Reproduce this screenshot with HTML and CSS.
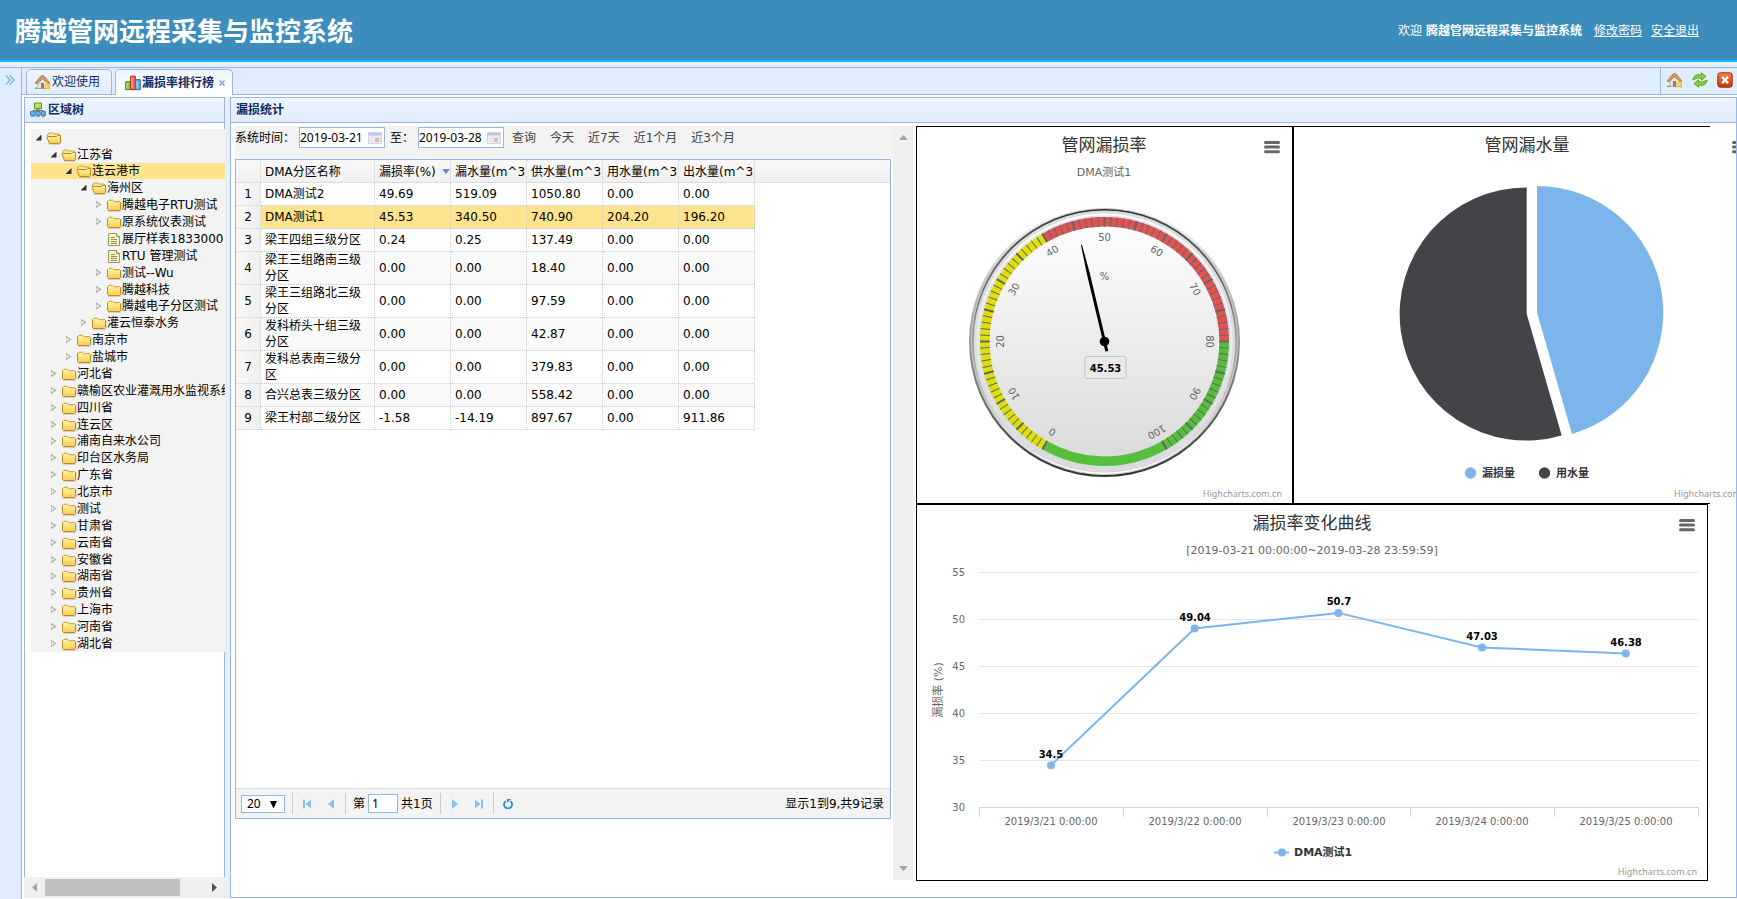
FILE: index.html
```html
<!DOCTYPE html>
<html lang="zh-CN">
<head>
<meta charset="utf-8">
<title>腾越管网远程采集与监控系统</title>
<link rel="stylesheet" href="styles.css">
</head>
<body>
<svg class="defs" aria-hidden="true">
  <defs>
    <linearGradient id="fold" x1="0" y1="0" x2="0" y2="1"><stop offset="0" stop-color="#fff6a0"/><stop offset="1" stop-color="#f5cb55"/></linearGradient>
    <linearGradient id="ora" x1="0" y1="0" x2="0" y2="1"><stop offset="0" stop-color="#f2833f"/><stop offset="1" stop-color="#c9370f"/></linearGradient>
    <linearGradient id="g1" x1="0" y1="0" x2="0" y2="1"><stop offset="0" stop-color="#fff"/><stop offset="1" stop-color="#333"/></linearGradient>
    <linearGradient id="g2" x1="0" y1="0" x2="0" y2="1"><stop offset="0" stop-color="#333"/><stop offset="1" stop-color="#fff"/></linearGradient>
    <linearGradient id="g3" x1="0" y1="0" x2="0" y2="1"><stop offset="0" stop-color="#fff"/><stop offset="1" stop-color="#d9d9d9"/></linearGradient>
    <symbol id="i-folder" viewBox="0 0 16 16">
      <path d="M2 14.500h12.500l.5-1V5" fill="none" stroke="#b9b9b9" opacity=".6"/>
      <path d="M1.500 12.500v-8l1-1h4l1 1h6l1 1v7l-1 1h-11z" fill="url(#fold)" stroke="#c08c22"/>
      <path d="M2 4.500l1-1.500h3.500l1.500 2H13" fill="none" stroke="#e3c684"/>
    </symbol>
    <symbol id="i-open" viewBox="0 0 16 16">
      <path d="M3 14.500h11l.8-1" fill="none" stroke="#b9b9b9" opacity=".6"/>
      <path d="M3 12.500L1.500 5l1.500-2h4l1 1h5l1 1.500v7z" fill="#f9e79a" stroke="#cfa23c"/>
      <path d="M3.500 13.500L1 7.500l.5-1h9l1-1h3v7l-1 1z" fill="url(#fold)" stroke="#bf8a20"/>
    </symbol>
    <symbol id="i-file" viewBox="0 0 16 16">
      <path d="M2.500 2.500h8l3 3v9h-11z" fill="#fbf8b8" stroke="#96946a"/>
      <path d="M10.500 2.500v3h3" fill="#ece9a8" stroke="#96946a"/>
      <path d="M5 6.500h4M5 8.500h6M5 10.500h6M5 12.500h6" stroke="#8c8c78"/>
    </symbol>
    <symbol id="i-house" viewBox="0 0 16 16">
      <path d="M0 13.500h15v1.500H0z" fill="#7cb25a"/>
      <path d="M3 7.500L7.500 3 12.500 8v6.500H3z" fill="#e7e7e3" stroke="#a9a9a2" stroke-width=".7"/>
      <path d="M6 9h3v5.500H6z" fill="#77808a"/>
      <path d="M0 9L6 2q1.500-1.200 3 0l6 7-2 .8-5.500-5-5.300 5.200z" fill="#cf9a62" stroke="#9c6a39" stroke-width=".7"/>
      <path d="M12 8.500l1.200 2.300 2.500.3-1.800 1.900.5 2.500-2.400-1.200-2.300 1.200.4-2.500-1.800-1.900 2.500-.3z" fill="#ffd64d" stroke="#f0a92b" stroke-width=".5"/>
    </symbol>
    <symbol id="i-bars" viewBox="0 0 16 16">
      <path d="M.7 6.700h4.600v8H.7z" fill="#8fcb3a" stroke="#3f8a28"/>
      <path d="M5.700 1.200h4.600v13.500H5.700z" fill="#f4685a" stroke="#b3261e"/>
      <path d="M10.700 4.700h4.600v10h-4.600z" fill="#63b3e6" stroke="#2c6aa5"/>
      <path d="M2 8v5.500M7 2.500v11M12 6v7.500" stroke="#fff" opacity=".5"/>
    </symbol>
    <symbol id="i-tree" viewBox="0 0 16 16">
      <path d="M8 6v4M3 10.500V8.500h10v2" fill="none" stroke="#777"/>
      <path d="M4.500 1h7v5.500h-7z" fill="#b9e35c" stroke="#5a9a2a"/>
      <path d="M5.500 7.500h5v1h-5z" fill="#777"/>
      <path d="M.6 9.600h4.200v3.800H.6zM5.900 9.600h4.200v3.800H5.900zM11.200 9.600h4.200v3.800h-4.200z" fill="#6db8ea" stroke="#3c7fb4"/>
      <path d="M1 14.700h3.500M6.200 14.700h3.500M11.500 14.700H15" stroke="#8a9aa6"/>
    </symbol>
    <symbol id="i-sync" viewBox="0 0 16 16">
      <path d="M1 8c0-3.600 3-5.600 6-5.300h2.500V.8L14 4.500 9.500 8V6H7C5 6 4 6.500 1 8z" fill="#8ccf31" stroke="#4e8f18" stroke-width=".8"/>
      <path d="M15 8c0 3.600-3 5.600-6 5.300H6.500v1.900L2 11.500 6.500 8v2H9c2 0 3-.5 6-2z" fill="#8ccf31" stroke="#4e8f18" stroke-width=".8"/>
    </symbol>
    <symbol id="i-close" viewBox="0 0 16 16">
      <rect x=".8" y=".8" width="14.400" height="14.400" rx="2.500" fill="url(#ora)" stroke="#9c2a0b"/>
      <path d="M5 4.800l6 6.400M11 4.800l-6 6.400" stroke="#fff" stroke-width="2.400"/>
    </symbol>
    <symbol id="i-cal" viewBox="0 0 14 14">
      <path d="M.5 1.500h13v11H.5z" fill="#eef1f8" stroke="#cdd5e6"/>
      <path d="M1 2h12v2.500H1z" fill="#b9c8e6"/>
      <path d="M1 7h12M1 10h12M4.500 5v7M9.500 5v7" stroke="#dde2ee"/>
      <path d="M7 7h4v4H7z" fill="#f2b39f"/>
    </symbol>
    <symbol id="i-menu" viewBox="0 0 18 14"><path d="M2.500 2.500h13M2.500 7h13M2.500 11.700h13" stroke="#666" stroke-width="3" stroke-linecap="round"/></symbol>
  </defs>
</svg>

<header class="top">
  <h1>腾越管网远程采集与监控系统</h1>
  <div class="user">欢迎 <b>腾越管网远程采集与监控系统</b><a href="#">修改密码</a><a href="#">安全退出</a></div>
</header>

<div class="shell">
  <aside class="rail">
    <button type="button" aria-label="展开"><svg width="10" height="10" viewBox="0 0 10 10"><path d="M1 .5L5 5 1 9.500M5 .5L9 5 5 9.500" fill="none" stroke="#7fb8ee" stroke-width="1.500"/></svg></button>
  </aside>

  <main class="work">
    <nav class="tabs">
      <button type="button" class="tab"><svg><use href="#i-house"/></svg>欢迎使用</button>
      <div class="tab active"><button type="button"><svg><use href="#i-bars"/></svg>漏损率排行榜</button><button type="button" class="x" aria-label="关闭"><svg viewBox="0 0 6 6"><path d="M.5.5l5 5M5.500.5l-5 5" stroke="#8ba0c9" stroke-width="1.500"/></svg></button></div>
      <div class="tools">
        <button type="button" aria-label="首页"><svg><use href="#i-house"/></svg></button>
        <button type="button" aria-label="刷新"><svg><use href="#i-sync"/></svg></button>
        <button type="button" aria-label="关闭全部"><svg><use href="#i-close"/></svg></button>
      </div>
    </nav>

    <div class="panes">
      <section class="side">
        <h2 class="head"><svg><use href="#i-tree"/></svg>区域树</h2>
        <div class="side-body">
          <ul class="tree">
            <li class="l0 exp"><i></i><svg><use href="#i-open"/></svg></li>
            <li class="l1 exp"><i></i><svg><use href="#i-open"/></svg>江苏省</li>
            <li class="l2 exp sel"><i></i><svg><use href="#i-open"/></svg>连云港市</li>
            <li class="l3 exp"><i></i><svg><use href="#i-open"/></svg>海州区</li>
            <li class="l4"><i></i><svg><use href="#i-folder"/></svg>腾越电子RTU测试</li>
            <li class="l4"><i></i><svg><use href="#i-folder"/></svg>原系统仪表测试</li>
            <li class="l4 leaf"><i></i><svg><use href="#i-file"/></svg>展厅样表1833000</li>
            <li class="l4 leaf"><i></i><svg><use href="#i-file"/></svg>RTU 管理测试</li>
            <li class="l4"><i></i><svg><use href="#i-folder"/></svg>测试--Wu</li>
            <li class="l4"><i></i><svg><use href="#i-folder"/></svg>腾越科技</li>
            <li class="l4"><i></i><svg><use href="#i-folder"/></svg>腾越电子分区测试</li>
            <li class="l3"><i></i><svg><use href="#i-folder"/></svg>灌云恒泰水务</li>
            <li class="l2"><i></i><svg><use href="#i-folder"/></svg>南京市</li>
            <li class="l2"><i></i><svg><use href="#i-folder"/></svg>盐城市</li>
            <li class="l1"><i></i><svg><use href="#i-folder"/></svg>河北省</li>
            <li class="l1"><i></i><svg><use href="#i-folder"/></svg>赣榆区农业灌溉用水监视系统</li>
            <li class="l1"><i></i><svg><use href="#i-folder"/></svg>四川省</li>
            <li class="l1"><i></i><svg><use href="#i-folder"/></svg>连云区</li>
            <li class="l1"><i></i><svg><use href="#i-folder"/></svg>浦南自来水公司</li>
            <li class="l1"><i></i><svg><use href="#i-folder"/></svg>印台区水务局</li>
            <li class="l1"><i></i><svg><use href="#i-folder"/></svg>广东省</li>
            <li class="l1"><i></i><svg><use href="#i-folder"/></svg>北京市</li>
            <li class="l1"><i></i><svg><use href="#i-folder"/></svg>测试</li>
            <li class="l1"><i></i><svg><use href="#i-folder"/></svg>甘肃省</li>
            <li class="l1"><i></i><svg><use href="#i-folder"/></svg>云南省</li>
            <li class="l1"><i></i><svg><use href="#i-folder"/></svg>安徽省</li>
            <li class="l1"><i></i><svg><use href="#i-folder"/></svg>湖南省</li>
            <li class="l1"><i></i><svg><use href="#i-folder"/></svg>贵州省</li>
            <li class="l1"><i></i><svg><use href="#i-folder"/></svg>上海市</li>
            <li class="l1"><i></i><svg><use href="#i-folder"/></svg>河南省</li>
            <li class="l1"><i></i><svg><use href="#i-folder"/></svg>湖北省</li>
          </ul>
        </div>
        <div class="hbar" aria-hidden="true"><span class="al"></span><span class="thumb"></span><span class="ar"></span></div>
      </section>

      <section class="center">
        <h2 class="head">漏损统计</h2>
        <div class="stage">
          <div class="report">
            <form class="bar">
              <label for="d1">系统时间：</label>
              <span class="date"><input id="d1" type="text" value="2019-03-21"><svg><use href="#i-cal"/></svg></span>
              <label class="to" for="d2">至：</label>
              <span class="date"><input id="d2" type="text" value="2019-03-28"><svg><use href="#i-cal"/></svg></span>
              <span class="quick">
                <button type="button">查询</button><button type="button">今天</button><button type="button">近7天</button><button type="button">近1个月</button><button type="button">近3个月</button>
              </span>
            </form>
            <div class="grid">
              <div class="view">
                <table>
                  <colgroup><col class="cn"><col class="cname"><col class="cv"><col class="cv"><col class="cv"><col class="cv"><col class="cv"><col></colgroup>
                  <thead><tr><th></th><th><div>DMA分区名称</div></th><th class="sort"><div>漏损率(%)</div></th><th><div>漏水量(m^3)</div></th><th><div>供水量(m^3)</div></th><th><div>用水量(m^3)</div></th><th><div>出水量(m^3)</div></th><th class="fill"></th></tr></thead>
                  <tbody>
                    <tr><td>1</td><td>DMA测试2</td><td>49.69</td><td>519.09</td><td>1050.80</td><td>0.00</td><td>0.00</td></tr>
                    <tr class="on"><td>2</td><td>DMA测试1</td><td>45.53</td><td>340.50</td><td>740.90</td><td>204.20</td><td>196.20</td></tr>
                    <tr><td>3</td><td>梁王四组三级分区</td><td>0.24</td><td>0.25</td><td>137.49</td><td>0.00</td><td>0.00</td></tr>
                    <tr><td>4</td><td>梁王三组路南三级分区</td><td>0.00</td><td>0.00</td><td>18.40</td><td>0.00</td><td>0.00</td></tr>
                    <tr><td>5</td><td>梁王三组路北三级分区</td><td>0.00</td><td>0.00</td><td>97.59</td><td>0.00</td><td>0.00</td></tr>
                    <tr><td>6</td><td>发科桥头十组三级分区</td><td>0.00</td><td>0.00</td><td>42.87</td><td>0.00</td><td>0.00</td></tr>
                    <tr><td>7</td><td>发科总表南三级分区</td><td>0.00</td><td>0.00</td><td>379.83</td><td>0.00</td><td>0.00</td></tr>
                    <tr><td>8</td><td>合兴总表三级分区</td><td>0.00</td><td>0.00</td><td>558.42</td><td>0.00</td><td>0.00</td></tr>
                    <tr><td>9</td><td>梁王村部二级分区</td><td>-1.58</td><td>-14.19</td><td>897.67</td><td>0.00</td><td>911.86</td></tr>
                  </tbody>
                </table>
              </div>
              <div class="pager">
                <span class="size"><select aria-label="每页条数"><option>20</option></select><svg width="7" height="8" viewBox="0 0 7 8"><path d="M0 0h7L3.500 7.500z"/></svg></span>
                <span class="sep"></span>
                <button type="button" aria-label="首页"><svg viewBox="0 0 10 10"><path d="M1 .5h2v9H1zM9 .5v9L3.500 5z"/></svg></button>
                <button type="button" aria-label="上一页"><svg viewBox="0 0 10 10"><path d="M8 0v10L2 5z"/></svg></button>
                <span class="sep"></span>
                <label for="pg">第</label><input id="pg" type="text" value="1"><span class="total">共1页</span>
                <span class="sep"></span>
                <button type="button" aria-label="下一页"><svg viewBox="0 0 10 10"><path d="M2 0v10l6-5z"/></svg></button>
                <button type="button" aria-label="末页"><svg viewBox="0 0 10 10"><path d="M7 .5h2v9H7zM1 .5v9L6.500 5z"/></svg></button>
                <span class="sep"></span>
                <button type="button" aria-label="刷新"><svg viewBox="0 0 10 10"><path d="M3 2A4 4 0 1 0 7.500 2.300" fill="none" stroke="#2f93dd" stroke-width="1.900"/><path d="M4 0h4.500L4 4z" fill="#2f93dd"/></svg></button>
                <span class="info">显示1到9,共9记录</span>
              </div>
            </div>
          </div>
          <div class="vbar" aria-hidden="true"><span class="up"></span><span class="down"></span></div>
          <div class="charts">
            <div class="row">
              <figure class="box gauge">
                <svg width="375" height="376" role="img" aria-label="管网漏损率">
                  <text x="187" y="24" class="ct">管网漏损率</text>
                  <text x="187" y="49" class="cs">DMA测试1</text>
                  <use href="#i-menu" x="346" y="13" width="18" height="14"/>
                  <g transform="translate(187.500 214.500)">
                    <circle r="135.500" fill="url(#g1)"/>
                    <circle r="133" fill="url(#g2)" stroke="#ccc" stroke-width="1"/>
                    <circle r="130.500" fill="url(#g3)" stroke="#ccc"/>
                    <circle r="129.200" fill="none" stroke="#ddd" stroke-width="2.500"/>
                    <circle r="125.500" fill="none" stroke="#d3daf0" stroke-width="1"/>
                    <g fill="none" stroke-width="9.600">
                      <path d="M-59.850 103.660A119.700 119.700 0 0 1-59.850-103.660" stroke="#dddf0d"/>
                      <path d="M-59.850-103.660A119.700 119.700 0 0 1 119.700 0" stroke="#df5353"/>
                      <path d="M119.700 0A119.700 119.700 0 0 1-59.850 103.660" stroke="#55bf3b"/>
                      <path d="M-58 104.700A119.700 119.700 0 1 1 58 104.700" stroke="#666" pathLength="302" stroke-dasharray=".48 2.520" stroke-dashoffset="-.76"/>
                      <path d="M-58 104.700A119.700 119.700 0 1 1 58 104.700" stroke="#666" pathLength="302" stroke-dasharray=".96 14.040" stroke-dashoffset="-.52"/>
                    </g>
                    <g class="cl mid">
                      <text y="-101" transform="rotate(-150)">0</text>
                      <text y="-101" transform="rotate(-120)">10</text>
                      <text y="-101" transform="rotate(-90)">20</text>
                      <text y="-101" transform="rotate(-60)">30</text>
                      <text y="-101" transform="rotate(-30)">40</text>
                      <text y="-101">50</text>
                      <text y="-101" transform="rotate(30)">60</text>
                      <text y="-101" transform="rotate(60)">70</text>
                      <text y="-101" transform="rotate(90)">80</text>
                      <text y="-101" transform="rotate(120)">90</text>
                      <text y="-101" transform="rotate(150)">100</text>
                      <text y="-62">%</text>
                    </g>
                    <rect x="-19.500" y="15" width="41" height="22" rx="2" fill="#e9e9e9" stroke="#c4c4c4"/>
                    <text x="1" y="30" class="cv mid">45.53</text>
                    <path d="M-1.500 10L-1.500-70-.5-99.700H.5L1.500-70V10z" transform="rotate(-13.400)"/>
                    <circle r="4.800"/>
                  </g>
                  <text x="365" y="370" class="cc end">Highcharts.com.cn</text>
                </svg>
              </figure>
              <figure class="box pie">
                <svg width="467" height="376" role="img" aria-label="管网漏水量">
                  <text x="233" y="24" class="ct">管网漏水量</text>
                  <use href="#i-menu" x="437" y="13" width="18" height="14"/>
                  <path d="M243 185.500V59A126.500 126.500 0 0 1 278 307z" fill="#7cb5ec"/>
                  <path d="M232.700 187L267.700 308.400A126.500 126.500 0 1 1 232.700 60.500z" fill="#434348"/>
                  <circle cx="176.500" cy="346" r="5.700" fill="#7cb5ec"/><text x="188" y="350" class="cg">漏损量</text>
                  <circle cx="250.500" cy="346" r="5.700" fill="#434348"/><text x="262" y="350" class="cg">用水量</text>
                  <text x="380" y="370" class="cc">Highcharts.com.cn</text>
                </svg>
              </figure>
            </div>
            <figure class="box line">
              <svg width="790" height="375" role="img" aria-label="漏损率变化曲线">
                <text x="395" y="24" class="ct">漏损率变化曲线</text>
                <text x="395" y="49" class="cs">[2019-03-21 00:00:00~2019-03-28 23:59:59]</text>
                <use href="#i-menu" x="761" y="13" width="18" height="14"/>
                <path d="M62 67.500h720M62 114.500h720M62 161.500h720M62 208.500h720M62 255.500h720" stroke="#e6e6e6"/>
                <path d="M62 302.500h720M62.500 303v9M206.500 303v9M350.500 303v9M493.500 303v9M637.500 303v9M781.500 303v9" stroke="#ccd6eb"/>
                <g class="cl end">
                  <text x="48" y="71">55</text><text x="48" y="118">50</text><text x="48" y="165">45</text><text x="48" y="212">40</text><text x="48" y="259">35</text><text x="48" y="306">30</text>
                </g>
                <text transform="translate(25 185) rotate(-90)" class="cs">漏损率 (%)</text>
                <g class="cl mid">
                  <text x="134" y="320">2019/3/21 0:00:00</text><text x="278" y="320">2019/3/22 0:00:00</text><text x="422" y="320">2019/3/23 0:00:00</text><text x="565" y="320">2019/3/24 0:00:00</text><text x="709" y="320">2019/3/25 0:00:00</text>
                </g>
                <path d="M134 260.200L277.700 123.500 421.500 107.900 565 142.400 708.800 148.500" fill="none" stroke="#7cb5ec" stroke-width="2"/>
                <g fill="#7cb5ec"><circle cx="134" cy="260.200" r="4"/><circle cx="277.700" cy="123.500" r="4"/><circle cx="421.500" cy="107.900" r="4"/><circle cx="565" cy="142.400" r="4"/><circle cx="708.800" cy="148.500" r="4"/><circle cx="365" cy="347.500" r="4"/></g>
                <g class="cv mid">
                  <text x="134" y="253">34.5</text><text x="278" y="116">49.04</text><text x="422" y="100">50.7</text><text x="565" y="135">47.03</text><text x="709" y="141">46.38</text>
                </g>
                <path d="M357 347.500h15" stroke="#7cb5ec" stroke-width="2"/>
                <text x="377" y="351" class="cg">DMA测试1</text>
                <text x="780" y="370" class="cc end">Highcharts.com.cn</text>
              </svg>
            </figure>
          </div>
        </div>
      </section>
    </div>
  </main>
</div>
</body>
</html>
```
FILE: styles.css
```css
* { box-sizing: border-box; }

body {
  margin: 0;
  height: 100vh;
  display: flex;
  flex-direction: column;
  overflow: hidden;
  background: #e6eef8;
  color: #000;
  font: 12px/16px "DejaVu Sans", "Noto Sans CJK SC", sans-serif;
}

h1, h2, ul, figure { margin: 0; padding: 0; }
button, input, select { font: inherit; color: inherit; padding: 0; border: 0; background: none; }
button { display: flex; align-items: center; }
svg { display: block; flex: none; }
.defs { position: absolute; width: 0; height: 0; }

/* header */
.top {
  flex: none;
  height: 62px;
  padding: 0 38px 0 15px;
  display: flex;
  align-items: center;
  justify-content: space-between;
  background: #3c8dbc;
  border-bottom: 2px solid #00bfff;
  color: #fff;
}
.top h1 { font-size: 26px; line-height: 40px; font-family: "Noto Sans CJK SC", sans-serif; }
.user { display: flex; gap: 4px; font-family: "Noto Sans CJK SC", sans-serif; }
.user a { color: #fff; margin-left: 5px; }
.user b + a { margin-left: 8px; }

/* shell */
.shell { flex: 1; min-height: 0; margin-top: 5px; display: flex; border-top: 1px solid #95b8e7; }
.rail { flex: none; width: 22px; padding: 7px 0 0 5px; background: #e0ecff; border-right: 1px solid #95b8e7; }
.work { flex: 1; min-width: 0; display: flex; flex-direction: column; background: #fff; }

.tabs {
  flex: none;
  height: 27px;
  padding: 1px 0 0 4px;
  display: flex;
  gap: 3px;
  background: #e0ecff;
  border-bottom: 1px solid #95b8e7;
  color: #0e2d5f;
}
.tab {
  height: 25px;
  padding: 0 11px 0 8px;
  display: flex;
  align-items: center;
  gap: 1px;
  border: 1px solid #95b8e7;
  border-bottom: 0;
  border-radius: 5px 5px 0 0;
  background: linear-gradient(#eff5ff, #e0ecff);
}
.tab svg, .tools svg, .head svg { width: 16px; height: 16px; }
.tab button { gap: 1px; }
.tab.active { height: 26px; padding: 0 7px 0 9px; gap: 5px; background: linear-gradient(#eff5ff, #fff); font-weight: bold; }
.tab .x svg { width: 6px; height: 6px; }
.tools { margin: -1px 0 0 auto; padding: 0 4px 2px 6px; display: flex; gap: 9px; border-left: 1px solid #95b8e7; }

.panes { flex: 1; min-height: 0; padding: 2px 0 1px 2px; display: flex; }
.side { flex: none; width: 201px; display: flex; flex-direction: column; }
.center { flex: 1; min-width: 0; margin-left: 5px; display: flex; flex-direction: column; border: 1px solid #95b8e7; border-top: 0; background: #fff; box-shadow: -5px 0 #e6eef8; overflow: hidden; }
.head {
  flex: none;
  height: 26px;
  padding: 0 5px;
  display: flex;
  align-items: center;
  gap: 2px;
  border: solid #95b8e7;
  border-width: 1px 0;
  background: linear-gradient(#eff5ff, #e0ecff);
  color: #0e2d5f;
  font-size: 12px;
}
.side .head { border-width: 1px; }

/* region tree */
.side-body { flex: 1; min-height: 0; padding: 6px 0 0 6px; border: solid #95b8e7; border-width: 0 1px; overflow: clip; overflow-clip-margin: 1px; }
.tree { margin-right: -1px; list-style: none; background: #f3f3f3; overflow: hidden; }
.tree li { height: 17px; display: flex; align-items: center; white-space: nowrap; line-height: 16px; }
.tree li:nth-child(8n + 3) { height: 16px; }
.tree svg { width: 16px; height: 16px; }
.tree i { flex: none; width: 15px; display: flex; justify-content: center; }
.tree i::before {
  content: "";
  width: 6px;
  height: 8px;
  background: #aaa;
  clip-path: polygon(0 0, 100% 50%, 0 100%, 0 0, 1px 2px, 1px 6px, 4px 4px, 1px 2px);
}
.tree .exp i::before { height: 6px; background: #333; clip-path: polygon(100% 0, 100% 100%, 0 100%); }
.tree .leaf i::before { visibility: hidden; }
.l1 { padding-left: 15px; }
.l2 { padding-left: 30px; }
.l3 { padding-left: 45px; }
.l4 { padding-left: 60px; }
.sel { background: #ffe48d; }

.hbar { flex: none; height: 21px; padding: 2px 8px; display: flex; align-items: center; background: #f0f0f0; }
.hbar .thumb { flex: 0 1 135px; height: 17px; margin: 0 auto 0 8px; background: #c1c1c1; }
.al, .ar { width: 5px; height: 9px; background: #a3a3a3; clip-path: polygon(100% 0, 100% 100%, 0 50%); }
.ar { background: #505050; clip-path: polygon(0 0, 100% 50%, 0 100%); }

/* report */
.stage { flex: 1; min-height: 0; padding: 3px 0 17px 4px; display: flex; }
.report { flex: 1; min-width: 0; padding-bottom: 61px; display: flex; flex-direction: column; }
.bar { flex: none; height: 33px; padding-top: 1px; display: flex; align-items: flex-start; background: #f3f3f3; }
.bar label { width: 64px; line-height: 22px; white-space: nowrap; }
.bar .to { width: 28px; margin-left: 5px; }
.date { width: 86px; height: 21px; padding: 0 2px 0 0; display: flex; align-items: center; border: 1px solid #95b8e7; background: #fff; }
.date input { flex: 1; min-width: 0; font-family: "Noto Sans", sans-serif; }
.date svg { width: 14px; height: 14px; }
.quick { padding-left: 8px; display: flex; gap: 14px; line-height: 22px; color: #444; white-space: nowrap; }

.grid { flex: 1; min-height: 0; margin-right: 2px; display: flex; flex-direction: column; border: 1px solid #95b8e7; }
.view { flex: 1; min-height: 0; overflow: hidden; }
table { width: 100%; table-layout: fixed; border-collapse: separate; border-spacing: 0; }
.cn { width: 25px; }
.cname { width: 114px; }
col.cv { width: 76px; }
th { height: 23px; padding: 0 0 0 4px; text-align: left; font-weight: normal; background: linear-gradient(#f9f9f9, #efefef); border: 0 dotted #ccc; border-width: 0 1px 0 0; box-shadow: inset 0 -1px #ddd; }
th div { overflow: hidden; white-space: nowrap; }
th.fill { border: 0; }
th.sort div { display: flex; align-items: center; justify-content: space-between; }
th.sort div::after { content: ""; flex: none; width: 8px; height: 5px; background: #5f8fd6; clip-path: polygon(0 0, 100% 0, 50% 100%); }
td { height: 23px; padding: 0 4px; border: 0 dotted #ccc; border-width: 0 1px 1px 0; }
td:first-child { padding: 0; text-align: center; background: linear-gradient(90deg, #f9f9f9, #efefef); }
tr:nth-child(even) td:not(:first-child) { background: #fafafa; }
tr.on td:not(:first-child) { background: #ffe48d; }

.pager { flex: none; height: 30px; padding: 0 6px 0 5px; display: flex; align-items: center; border-top: 1px solid #ddd; background: #f3f3f3; white-space: nowrap; }
.size { position: relative; margin-right: 5px; }
.size select { width: 44px; height: 18px; padding-left: 5px; appearance: none; border: 1px solid #95b8e7; background: #fff; font-family: "Noto Sans", sans-serif; line-height: 16px; }
.size svg { position: absolute; right: 8px; top: 6px; pointer-events: none; }
.sep { width: 1px; height: 21px; margin: 0 2px; background: #ccc; }
.pager button { width: 24px; height: 24px; justify-content: center; }
.pager button svg { width: 10px; height: 10px; fill: #86c3ee; }
.pager label { margin-left: 5px; }
.pager input { width: 30px; height: 19px; margin: 0 3px; padding-left: 3px; border: 1px solid #95b8e7; background: #fff; font-family: "Noto Sans", sans-serif; }
.total { margin-right: 5px; }
.info { margin-left: auto; }

.vbar { flex: none; width: 21px; padding: 9px 0; display: flex; flex-direction: column; justify-content: space-between; align-items: center; background: #f0f0f0; }
.up, .down { width: 9px; height: 5px; background: #a3a3a3; clip-path: polygon(50% 0, 100% 100%, 0 100%); }
.down { clip-path: polygon(0 0, 100% 0, 50% 100%); }

/* charts */
.charts { flex: none; width: 822px; padding-left: 2px; }
.row { display: flex; width: 794px; }
.box { border: 1px solid #000; }
.pie { flex: 1; min-width: 0; border-right: 0; }
.line { width: 792px; }
.charts text { fill: #333; font-family: "DejaVu Sans", "Noto Sans CJK SC", sans-serif; }
.charts .ct { font-size: 17px; text-anchor: middle; }
.charts .cs { font-size: 11px; fill: #666; text-anchor: middle; }
.charts .cg { font-size: 11px; font-weight: bold; }
.charts .cc { font-size: 9px; fill: #999; font-family: "Noto Sans", sans-serif; }
.charts .cl text { font-size: 10px; fill: #666; }
.charts .cv, .charts .cv text { font-size: 10px; font-weight: bold; fill: #000; }
.mid { text-anchor: middle; }
.end { text-anchor: end; }
```
